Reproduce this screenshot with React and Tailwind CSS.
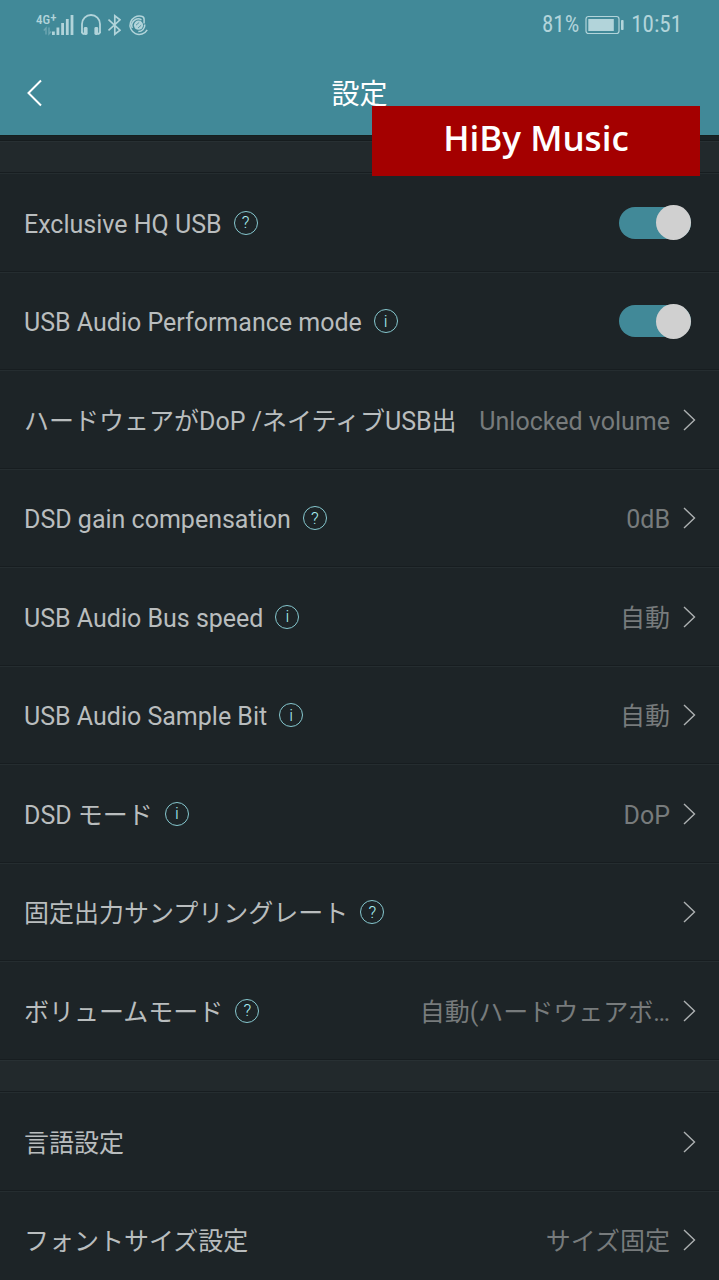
import React, { useState } from "react";

const usbSettings = [
  { id: "exclusive", label: "Exclusive HQ USB", hint: "?", toggle: true },
  { id: "performance", label: "USB Audio Performance mode", hint: "i", toggle: true },
  { id: "hardware", label: "ハードウェアがDoP /ネイティブUSB出", value: "Unlocked volume" },
  { id: "gain", label: "DSD gain compensation", hint: "?", value: "0dB" },
  { id: "bus", label: "USB Audio Bus speed", hint: "i", value: "自動" },
  { id: "bit", label: "USB Audio Sample Bit", hint: "i", value: "自動" },
  { id: "dsd", label: "DSD モード", hint: "i", value: "DoP" },
  { id: "rate", label: "固定出力サンプリングレート", hint: "?" },
  { id: "volume", label: "ボリュームモード", hint: "?", value: "自動(ハードウェアボ…" },
];

const generalSettings = [
  { id: "language", label: "言語設定" },
  { id: "fontsize", label: "フォントサイズ設定", value: "サイズ固定" },
];

const App = () => {
  return (
    <div className="relative flex h-screen flex-col overflow-hidden bg-[#1d2427] font-[Roboto,'Noto_Sans_CJK_JP',sans-serif] text-[25px] leading-8 text-[#b9bdbe]">
      <header className="shrink-0 bg-[#418998]">
        <StatusBar />
        <div className="grid h-[84px] grid-cols-[1fr_auto_1fr] items-center px-6">
          <button type="button" aria-label="戻る" className="w-8 text-white">
            <svg viewBox="0 0 20 28" className="h-7 w-5" fill="none" stroke="currentColor" strokeWidth="2">
              <path d="M17 1.5 4.5 14 17 26.5" />
            </svg>
          </button>
          <h1 className="pt-1 text-[28px] text-white">設定</h1>
        </div>
      </header>

      <main className="min-h-0 flex-1 overflow-y-auto [scrollbar-width:none]">
        <div className="h-1.5 border-t border-b border-t-[#16201f] border-b-[#161c1e] bg-[#1a2326]" />
        <Divider />
        <Section items={usbSettings} />
        <Divider />
        <Section items={generalSettings} />
      </main>

      <div className="absolute top-[106px] right-[19px] flex h-[70px] w-[328px] items-center justify-center bg-[#a40000] pb-1.5 font-['Open_Sans','Noto_Sans',sans-serif] text-[35px] font-semibold text-white">
        HiBy Music
      </div>
    </div>
  );
};

export default App;

// ---------------- List ----------------
const Divider = () => (
  <div className="h-8 border-t border-b border-t-[#283033] border-b-[#171d20] bg-[#22292c]" />
);

const Section = ({ items }) => (
  <ul>
    {items.map((item) => (
      <SettingRow key={item.id} item={item} />
    ))}
  </ul>
);

const SettingRow = ({ item }) => {
  const [checked, setChecked] = useState(true);

  return (
    <li className="flex items-center justify-between border-t border-b border-t-[#252d30] border-b-[#171d20] pr-[23px] pl-6 whitespace-nowrap odd:h-[99px] even:h-[98px]">
      <div className="flex items-center gap-3">
        <label htmlFor={item.id} className="pt-1">{item.label}</label>
        {item.hint && <HintButton sign={item.hint} />}
      </div>
      {item.toggle ? (
        <input
          id={item.id}
          type="checkbox"
          role="switch"
          checked={checked}
          onChange={(e) => setChecked(e.target.checked)}
          className="mr-[5px] flex h-8 w-[72px] appearance-none items-center rounded-full bg-gray-600 before:size-[35px] before:shrink-0 before:rounded-full before:bg-[#d0d0d0] before:content-[''] checked:justify-end checked:bg-[#418998]"
        />
      ) : (
        <button id={item.id} type="button" className="flex items-center gap-3 text-[#777b7c]">
          <span className="pt-1">{item.value}</span>
          <svg viewBox="0 0 14 22" className="h-[22px] w-3.5" fill="none" stroke="#adb1b2" strokeWidth="1.4">
            <path d="M2 1 12.5 11 2 21" />
          </svg>
        </button>
      )}
    </li>
  );
};

const HintButton = ({ sign }) => (
  <button
    type="button"
    className="flex size-6 items-center justify-center rounded-full border border-[#86c8cf] text-[17px] leading-none font-light text-[#a8f0f5]"
  >
    {sign}
  </button>
);

// ---------------- Status bar ----------------
const StatusBar = () => (
  <div className="flex h-[51px] items-center justify-between pr-[37px] pb-0.5 pl-9 text-[#b2d4da]">
    <div className="flex items-center gap-[7px]">
      <div className="flex">
        <div className="flex w-4 flex-col items-end">
          <span className="flex w-full text-[13px] leading-3 font-medium font-['Roboto_Condensed','Liberation_Sans_Narrow',Roboto,sans-serif]">
            4G<span className="leading-2">+</span>
          </span>
          <svg viewBox="0 0 9 9" className="h-2.5 w-[9px] opacity-40" fill="none" stroke="currentColor" strokeWidth="1.4">
            <path d="M3 8V1.5L.8 4M6 1v6.500L8.200 5" />
          </svg>
        </div>
        <svg viewBox="0 0 22 22" className="size-[22px]" fill="currentColor">
          <rect x="0" y="17.500" width="2.800" height="3.500" />
          <rect x="4.500" y="13.500" width="2.800" height="7.500" />
          <rect x="9.200" y="9" width="2.800" height="12" />
          <rect x="13.900" y="5" width="2.800" height="16" />
          <rect x="18.600" y="1" width="2.800" height="20" />
        </svg>
      </div>

      <svg viewBox="0 0 20 22" className="h-[22px] w-5" fill="none" stroke="currentColor" strokeWidth="1.800">
        <path d="M1 19V10a9 9 0 0 1 18 0v9" />
        <rect x="2.800" y="13" width="3.800" height="8" rx="1.400" fill="currentColor" stroke="none" />
        <rect x="13.400" y="13" width="3.800" height="8" rx="1.400" fill="currentColor" stroke="none" />
        <path d="M1 17.500q0 2.500 2.500 2.500M19 17.500q0 2.500-2.500 2.500" />
      </svg>

      <svg viewBox="0 0 13 22" className="h-[22px] w-[13px]" fill="none" stroke="currentColor" strokeWidth="1.700">
        <path d="M.5 5.500 12 16.200 6.800 20.200V1.800L12 5.800.5 16.500" />
      </svg>

      <svg viewBox="0 0 20 22" className="h-[22px] w-5" fill="none" stroke="currentColor" strokeWidth="1.500">
        <path d="M19.200 15.800A9.200 9.200 0 1 1 13.500 2.300q2.600.6 2.600 3v4.200" />
        <path d="M4.300 14A6.500 6.500 0 0 1 13.500 5.800" />
        <path d="M16.800 10.500a6.500 6.500 0 0 1-6.500 7" />
        <circle cx="10.500" cy="11.200" r="4.600" fill="currentColor" stroke="none" />
        <path d="M8 11.200l3.200-2.800M10 14l3.200-2.800" stroke="#418998" strokeWidth=".8" />
      </svg>
    </div>

    <div className="flex items-center gap-1.5 font-['Roboto_Condensed','Liberation_Sans_Narrow',Roboto,sans-serif] text-[23px]">
      <span>81%</span>
      <svg viewBox="0 0 40 20" className="h-5 w-10" fill="none">
        <rect x="1" y="1.500" width="33" height="17" rx="2.500" stroke="currentColor" strokeWidth="1.200" />
        <rect x="3.300" y="4" width="25.500" height="12" fill="currentColor" />
        <rect x="36" y="5" width="2.600" height="10" rx=".8" fill="currentColor" />
      </svg>
      <span>10:51</span>
    </div>
  </div>
);
